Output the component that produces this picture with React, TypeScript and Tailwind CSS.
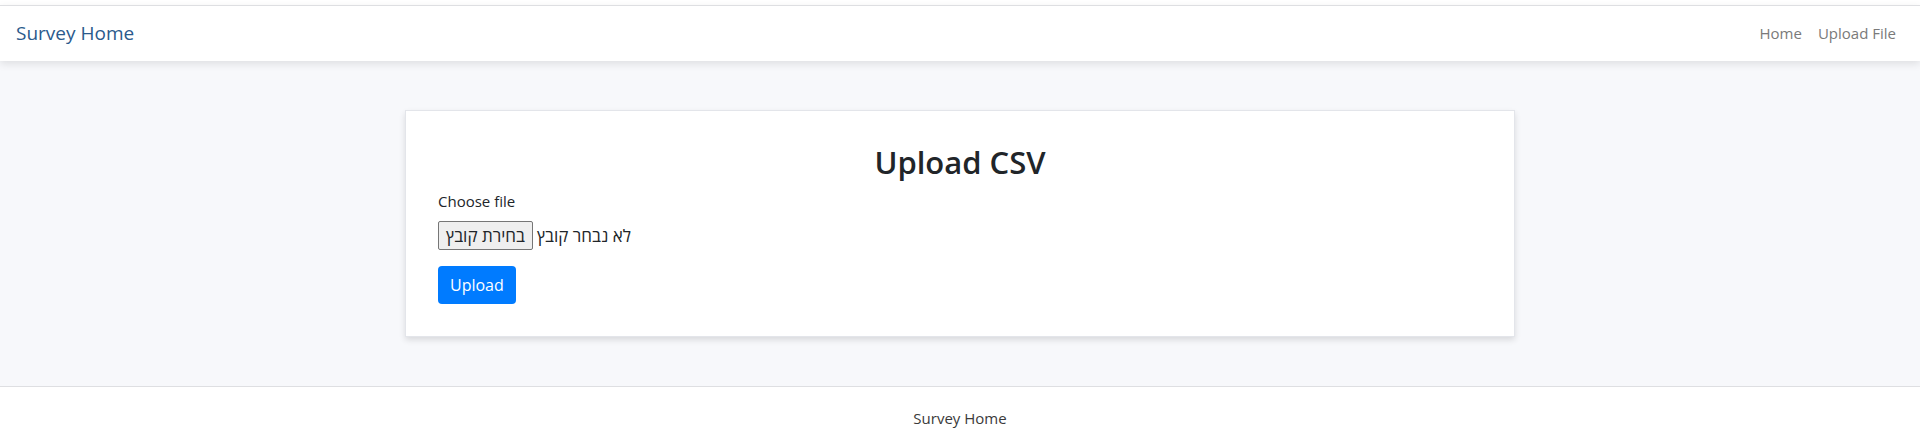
import React from 'react';

const font = { fontFamily: '"Open Sans", "DejaVu Sans", sans-serif' };

function Navbar() {
  return (
    <div className="pt-[5px] bg-white">
      <nav className="h-[56px] border-t border-[#dedfe2] bg-white shadow-[0_3px_8px_rgba(0,0,0,0.10)] relative z-10 flex items-center justify-between pl-4 pr-6">
        <a className="text-[19px] text-[#2b5a8c] leading-none">Survey Home</a>
        <div className="flex items-center text-[15px] text-[#7a7a7a]">
          <a className="px-2">Home</a>
          <a className="pl-2">Upload File</a>
        </div>
      </nav>
    </div>
  );
}

function UploadCard() {
  return (
    <div className="max-w-[1110px] mx-auto bg-white border border-[#e3e5ea] shadow-[0_3px_6px_rgba(0,0,0,0.12)] p-8">
      <h2 className="text-center text-[31px] font-semibold text-[#212529] leading-[38px] mb-2">Upload CSV</h2>
      <label className="block text-[15px] text-[#212529] leading-6 mb-2">Choose file</label>
      <div className="flex items-center h-[29px] text-[#212529] mb-4">
        <span className="h-[29px] px-[7px] flex items-center bg-[#efefef] border border-[#767676] rounded-[2px] text-[17px]" dir="rtl">
          בחירת קובץ
        </span>
        <span className="ml-[4px] text-[17px]" dir="rtl">לא נבחר קובץ</span>
      </div>
      <button className="h-[38px] px-3 bg-[#007bff] text-white text-[16px] rounded-[4px]">Upload</button>
    </div>
  );
}

export default function App() {
  return (
    <div style={font} className="min-h-screen bg-white">
      <Navbar />
      <main className="bg-[#f7f8fb] pt-[49px] pb-[49px]">
        <UploadCard />
      </main>
      <footer className="border-t border-[#dedfe2] bg-white pt-[19px] pb-4 text-center">
        <span className="text-[15px] text-[#3a3a3a]">Survey Home</span>
      </footer>
    </div>
  );
}
